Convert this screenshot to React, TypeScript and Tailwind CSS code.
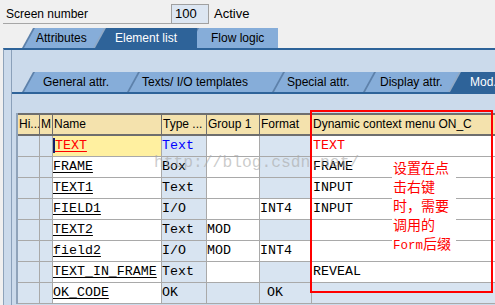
import React from 'react';

type Row = {
  name: string;
  type: string;
  group: string;
  format: string;
  ctx: string;
  whiteFormat?: boolean;
  last?: boolean;
  active?: boolean;
};

const rows: Row[] = [
  { name: 'TEXT', type: 'Text', group: '', format: '', ctx: 'TEXT', active: true },
  { name: 'FRAME', type: 'Box', group: '', format: '', ctx: 'FRAME' },
  { name: 'TEXT1', type: 'Text', group: '', format: '', ctx: 'INPUT' },
  { name: 'FIELD1', type: 'I/O', group: '', format: 'INT4', ctx: 'INPUT', whiteFormat: true },
  { name: 'TEXT2', type: 'Text', group: 'MOD', format: '', ctx: '' },
  { name: 'field2', type: 'I/O', group: 'MOD', format: 'INT4', ctx: '', whiteFormat: true },
  { name: 'TEXT_IN_FRAME', type: 'Text', group: '', format: '', ctx: 'REVEAL' },
  { name: 'OK_CODE', type: 'OK', group: '', format: 'OK', ctx: '', last: true },
];

const headers = ['Hi...', 'M', 'Name', 'Type ...', 'Group 1', 'Format', 'Dynamic context menu ON_C'];

const cols = 'grid grid-cols-[21px_12px_108px_44px_52px_51px_1fr] gap-px';

function Tab({ label, className, active }: { label: string; className: string; active?: boolean }) {
  return (
    <div className={`relative flex h-[20px] shrink-0 items-center ${className}`}>
      <div
        className={`absolute inset-0 [clip-path:polygon(11px_0,100%_0,100%_100%,0_100%)] ${
          active ? 'bg-[#8fa9c6]' : 'bg-[#5d81aa]'
        }`}
      />
      <div
        className={`absolute inset-0 [clip-path:polygon(13px_0,100%_0,100%_100%,2px_100%)] ${
          active ? 'bg-[#2e6399]' : 'bg-[#86add9]'
        }`}
      />
      <span className={`relative whitespace-nowrap text-[12px] ${active ? 'text-white' : 'text-black'}`}>{label}</span>
    </div>
  );
}

export default function App() {
  return (
    <div className="relative flex h-[305px] w-[495px] flex-col overflow-hidden bg-[#f0f0f0] font-['Liberation_Sans',Arial,sans-serif] text-black">
      {/* screen number */}
      <div className="flex h-[28px] items-start pt-[4px] text-[12px]">
        <div className="ml-[3px] h-[20px] w-[168px] border-b border-[#a6a6a6] pl-[3px] leading-[20px]">Screen number</div>
        <div className="h-[20px] w-[38px] border border-[#a0a0a0] bg-[#dce6f2] pl-[3px] text-[13px] leading-[18px]">100</div>
        <div className="ml-[5px] text-[13px] leading-[20px]">Active</div>
      </div>

      {/* main tabs */}
      <div className="flex h-[20px] pl-[22px]">
        <Tab label="Attributes" className="w-[82px] pl-[14px]" />
        <Tab label="Element list" className="z-20 -ml-[11px] w-[104px] pl-[22px]" active />
        <Tab label="Flow logic" className="z-10 -ml-[11px] w-[92px] pl-[25px]" />
      </div>

      <div className="ml-[3px] flex flex-1 flex-col border-l border-t-2 border-l-[#8ea3ba] border-t-[#2e6399] bg-[#cbdaeb]">
        <div className="ml-[7px] flex flex-1 flex-col border-l border-[#8aa0ba] pt-[22px]">
          {/* sub tabs */}
          <div className="flex h-[20px] pl-[10px]">
            <Tab label="General attr." className="w-[116px] pl-[21px]" />
            <Tab label="Texts/ I/O templates" className="-ml-[11px] w-[156px] pl-[15px]" />
            <Tab label="Special attr." className="-ml-[11px] w-[102px] pl-[15px]" />
            <Tab label="Display attr." className="-ml-[11px] w-[96px] pl-[17px]" />
            <Tab label="Mod." className="-ml-[11px] w-[60px] pl-[22px]" active />
          </div>

          <div className="flex-1 border-t-2 border-[#2e6399] pl-[4px] pt-[19px]">
            <div className="border-l-2 border-[#8fa3ba]">
              <div className={`${cols} border-y-2 border-[#6e6e6e] bg-[#6e6e6e] text-[12px] leading-[19px]`}>
                {headers.map((h) => (
                  <div key={h} className="overflow-hidden whitespace-nowrap bg-[#f4e2ad] pl-px">
                    {h}
                  </div>
                ))}
              </div>

              <div
                className={`${cols} auto-rows-[20px] bg-[#a9a9a9] pb-px font-['Liberation_Mono',monospace] text-[13.3px] leading-[20px]`}
              >
                {rows.map((r) => (
                  <React.Fragment key={r.name}>
                    <div className="bg-[#d8e4f1]" />
                    <div className="bg-[#d8e4f1]" />
                    <div className={`relative whitespace-nowrap ${r.active ? 'bg-[#fff0a0] pl-[2px]' : 'bg-white'}`}>
                      {r.active && <span className="absolute left-0 top-[2px] h-[15px] w-[2px] bg-[#14206a]" />}
                      <span
                        className={`underline decoration-1 underline-offset-[2px] ${r.active ? 'text-[#ff0000]' : ''}`}
                      >
                        {r.name}
                      </span>
                    </div>
                    <div className={`bg-[#d8e4f1] ${r.active ? 'text-[#0000ff]' : ''}`}>{r.type}</div>
                    <div className={r.last ? 'bg-[#d8e4f1]' : 'bg-white'}>{r.group}</div>
                    <div className={`${r.whiteFormat ? 'bg-white' : 'bg-[#d8e4f1]'} ${r.last ? 'pl-[7px]' : ''}`}>
                      {r.format}
                    </div>
                    <div className={`pl-px ${r.last ? 'bg-[#d8e4f1]' : 'bg-white'} ${r.active ? 'text-[#ff0000]' : ''}`}>
                      {r.ctx}
                    </div>
                  </React.Fragment>
                ))}
              </div>
            </div>
          </div>
        </div>
      </div>

      {/* watermark */}
      <div className="pointer-events-none absolute left-[154px] top-[153px] whitespace-nowrap font-['Liberation_Mono',monospace] text-[16.3px] leading-[20px] text-[#a8a8a8]/60">
        http://blog.csdn.net/
      </div>

      {/* annotation */}
      <div className="absolute left-[310px] top-[110px] h-[183px] w-[183px] border-2 border-[#ff0000]" />
      <div className="absolute left-[392px] top-[158px] w-[64px] bg-white pl-px font-['Noto_Sans_CJK_SC',sans-serif] text-[14px] leading-[19px] text-[#ff0000]">
        <div>设置在点</div>
        <div>击右键</div>
        <div>时，需要</div>
        <div>调用的</div>
        <div>
          <span className="font-['Liberation_Mono',monospace] text-[12.5px]">Form</span>后缀
        </div>
      </div>
    </div>
  );
}
